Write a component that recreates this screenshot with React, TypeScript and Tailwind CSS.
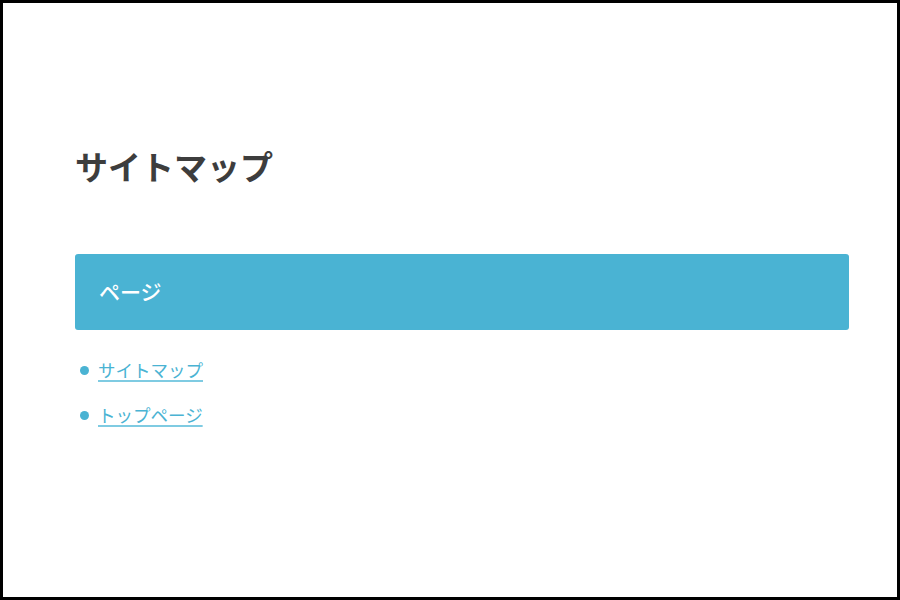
import React from 'react';

const pages = ['サイトマップ', 'トップページ'];

export default function App() {
  return (
    <div
      className="box-border h-[600px] w-[900px] overflow-hidden border-[3px] border-black bg-white"
      style={{ fontFamily: '"Noto Sans CJK JP", "Noto Sans", sans-serif' }}
    >
      <div className="pl-[72px] pr-[48px] pt-[139px]">
        <h1 className="text-[33px] font-bold leading-[48px] text-[#3d3d3d]">
          サイトマップ
        </h1>

        <div className="mt-[64px] flex h-[76px] items-center rounded-[3px] bg-[#4ab3d3] px-[24px]">
          <h2 className="text-[21px] font-medium text-white">ページ</h2>
        </div>

        <ul className="mt-[27px] flex flex-col gap-[19px] pl-[5px]">
          {pages.map((p) => (
            <li key={p} className="flex h-[26px] items-center gap-[9px]">
              <span className="h-[9px] w-[9px] rounded-full bg-[#4ab3d3]" />
              <a
                href="#"
                className="text-[17.5px] leading-[26px] text-[#4ab3d3] underline decoration-[#7fcbe2] decoration-[1.5px] underline-offset-[3px]"
              >
                {p}
              </a>
            </li>
          ))}
        </ul>
      </div>
    </div>
  );
}
